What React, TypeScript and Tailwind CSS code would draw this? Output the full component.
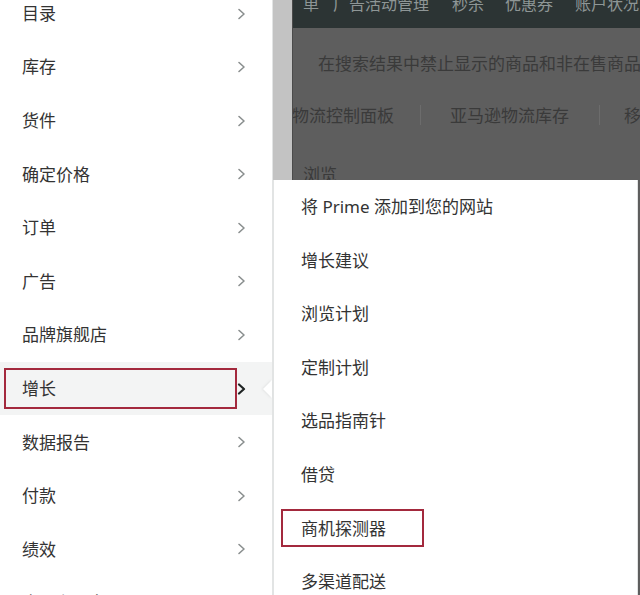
import type { FC } from 'react';

const LEFT_ITEMS = [
  '目录', '库存', '货件', '确定价格', '订单', '广告', '品牌旗舰店',
  '增长', '数据报告', '付款', '绩效', '应用和服务',
];

const SUB_ITEMS = [
  '将 Prime 添加到您的网站', '增长建议', '浏览计划', '定制计划',
  '选品指南针', '借贷', '商机探测器', '多渠道配送',
];

const Chevron: FC<{ dark?: boolean }> = ({ dark }) => (
  <svg width="9" height="12" viewBox="0 0 9 12" className="shrink-0">
    <polyline
      points="2,1.5 7,6 2,10.5"
      fill="none"
      stroke={dark ? '#1f2424' : '#8a8f8f'}
      strokeWidth={dark ? 2.2 : 1.6}
      strokeLinecap="round"
      strokeLinejoin="round"
    />
  </svg>
);

export default function App() {
  return (
    <div className="flex h-[595px] w-[640px] overflow-hidden bg-[#5e5e5e] font-['Noto_Sans','Noto_Sans_CJK_SC',sans-serif] text-[17px] text-[#333]">
      {/* Left main menu */}
      <nav className="relative w-[273px] shrink-0 border-r border-[#e2e4e4] bg-white">
        <ul className="-mt-[13.3px]">
          {LEFT_ITEMS.map((item) => {
            const active = item === '增长';
            return (
              <li
                key={item}
                className={`relative flex h-[53.6px] items-center ${active ? 'bg-[#f3f4f4]' : ''}`}
              >
                <div
                  className={`ml-[4px] flex h-[41px] w-[233px] items-center border-2 pl-[16px] ${
                    active ? 'border-[#a3293d]' : 'border-transparent'
                  }`}
                >
                  {item}
                </div>
                <Chevron dark={active} />
                {active && (
                  <span className="absolute right-0 top-[18px] h-0 w-0 border-y-[9px] border-r-[9px] border-y-transparent border-r-white drop-shadow-[-1px_0_1px_rgba(0,0,0,0.08)]" />
                )}
              </li>
            );
          })}
        </ul>
      </nav>

      {/* Right: dimmed page + submenu */}
      <div className="flex flex-1 flex-col">
        <div className="flex h-[180px] shrink-0">
          <div className="w-[20px] shrink-0 border-r border-[#4b4b4b] bg-[#c3c3c3]" />
          <div className="flex flex-1 flex-col overflow-hidden whitespace-nowrap text-[16px]">
            <div className="flex h-[28px] shrink-0 items-center overflow-hidden bg-[#2c3434] text-[#8e9696]">
              <div className="-mt-[20px] flex">
                <span className="ml-[10px]">单</span>
                <span className="ml-[14px]">广告活动管理</span>
                <span className="ml-[23px]">秒杀</span>
                <span className="ml-[21px]">优惠券</span>
                <span className="ml-[22px]">账户状况</span>
              </div>
            </div>
            <div className="flex flex-1 flex-col text-[17px] text-[#3a3a3a]">
              <p className="ml-[25px] mt-[23px]">在搜索结果中禁止显示的商品和非在售商品</p>
              <div className="mt-[26px] flex items-center">
                <span className="-ml-[1px]">物流控制面板</span>
                <span className="ml-[26px] h-[20px] w-px bg-[#6c6c6c]" />
                <span className="ml-[29px]">亚马逊物流库存</span>
                <span className="ml-[30px] h-[20px] w-px bg-[#6c6c6c]" />
                <span className="ml-[24px]">移</span>
              </div>
              <p className="ml-[10px] mt-[34px]">浏览</p>
            </div>
          </div>
        </div>

        <div className="flex flex-1">
          <ul className="w-[365px] shrink-0 border-x border-[#e2e4e4] bg-white">
            {SUB_ITEMS.map((item) => {
              const boxed = item === '商机探测器';
              return (
                <li key={item} className="flex h-[53.6px] items-center">
                  <div
                    className={`ml-[7px] flex h-[38px] items-center border-2 pl-[18px] ${
                      boxed ? 'w-[143px] border-[#a3293d]' : 'border-transparent'
                    }`}
                  >
                    {item}
                  </div>
                </li>
              );
            })}
          </ul>
        </div>
      </div>
    </div>
  );
}
